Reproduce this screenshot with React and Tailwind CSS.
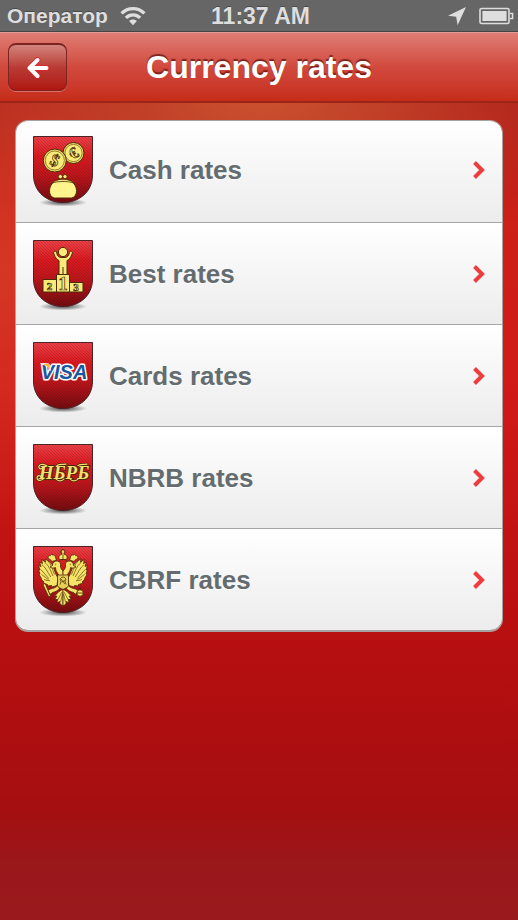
import React from 'react';

const gold = '#f7ea78';
const ink = '#4a2a08';

const WifiIcon = () => (
    <svg viewBox="0 0 26 20" className="w-[26px] h-5" fill="none" stroke="#dedede" strokeWidth="3.4" aria-hidden="true">
        <path d="M1.6 7.4C8 1 18 1 24.4 7.4" />
        <path d="M5.9 11.9c4.1-4 10.1-4 14.2 0" />
        <path d="M13 19.2l-3.9-4.1c2.2-2 5.6-2 7.8 0z" fill="#dedede" stroke="none" />
    </svg>
);

const LocationIcon = () => (
    <svg viewBox="0 0 20 20" className="size-5" aria-hidden="true">
        <path d="M19 1L10.6 19.2 9.2 10.8 1 9.8z" fill="#dedede" />
    </svg>
);

const BatteryIcon = () => (
    <svg viewBox="0 0 35 18" className="w-[35px] h-[18px]" aria-hidden="true">
        <rect x="1" y="1.5" width="29" height="15" rx="1.5" fill="none" stroke="#dedede" strokeWidth="1.6" />
        <rect x="3.4" y="4" width="24.2" height="10" fill="#dedede" />
        <path d="M31 6.5h2.6v5H31" fill="none" stroke="#dedede" strokeWidth="1.5" />
    </svg>
);

const CashEmblem = () => (
    <g stroke={ink} strokeWidth="1">
        <circle cx="40.5" cy="17" r="10.5" fill="#e8d85e" />
        <circle cx="40.5" cy="17" r="8.6" fill={gold} strokeWidth="0.5" />
        <text x="40.5" y="22.5" textAnchor="middle" transform="rotate(-30 40.5 17)" className="font-['Liberation_Serif',serif] font-bold text-[16px]" fill={gold} strokeWidth="0.7">€</text>
        <circle cx="21.8" cy="24.5" r="11.5" fill="#e8d85e" />
        <circle cx="21.8" cy="24.5" r="9.5" fill={gold} strokeWidth="0.5" />
        <text x="21.8" y="30" textAnchor="middle" transform="rotate(24 21.8 24.5)" className="font-['Liberation_Serif',serif] font-bold text-[17px]" fill={gold} strokeWidth="0.7">$</text>
        <path d="M20.5 46c5-3.500 14-3.500 19 0 2 2 4 5 4 8.500 0 5-2.500 7.500-6 7.500h-15c-3.500 0-6-2.500-6-7.500 0-3.500 2-6.500 4-8.500z" fill="#fff58c" />
        <path d="M19.5 47c4-5 17-5 21 0-5-2-16-2-21 0z" fill={gold} strokeWidth="0.8" />
        <circle cx="27.4" cy="40.6" r="2.1" fill={gold} strokeWidth="0.8" />
        <circle cx="32" cy="40.6" r="2.1" fill={gold} strokeWidth="0.8" />
    </g>
);

const BestEmblem = () => (
    <g stroke={ink} strokeWidth="1" fill={gold}>
        <path d="M21.500 11.300c-1.500.7-.8 2.200-.2 3.400.9 2.500 2.200 4.700 4.700 5.800v14h8v-14c2.500-1.100 3.800-3.300 4.700-5.800.6-1.200 1.300-2.700-.2-3.400-1.700-.6-2.200.7-2.300 2.200-.6 2-1.700 3.500-3.700 4h-5c-2-.5-3.100-2-3.700-4-.1-1.500-.6-2.800-2.300-2.200z" />
        <path d="M30 27v8" />
        <circle cx="30" cy="12" r="4.6" />
        <path d="M10 39.500h13.500V52H10zM36.500 42.500H50V52H36.500z" />
        <path d="M23.500 34.500h13V52h-13z" />
        <g textAnchor="middle" strokeWidth="0.7" className="font-['Liberation_Serif',serif] font-bold">
            <text x="16.5" y="49.5" className="text-[11px]">2</text>
            <text x="30" y="50" className="text-[19px]">1</text>
            <text x="43" y="51" className="text-[11px]">3</text>
        </g>
    </g>
);

const CardsEmblem = () => (
    <g>
        <text x="31" y="36.5" textAnchor="middle" className="font-['Liberation_Sans',Arial,sans-serif] font-bold italic text-[20px]" fill="#1657a0" stroke="#fff" strokeWidth="3" strokeLinejoin="round" paintOrder="stroke">VISA</text>
        <path d="M7.500 21.500h6.500c1.800 0 2.600.8 2.900 2.400l.8 4.800c-2-3.400-5.200-5.800-10.200-7.200z" fill="#f7b52c" stroke="#fff" strokeWidth="0.6" />
    </g>
);

const nbrbSwashes = 'M14 22c-4-3-9-1.500-8 1.500.8 2 3.600 1.500 3.500-.4M11 34c-2 3.400-7 3-7-.3 0-2.400 3.400-2.700 3.800-.6M23 35c2 2.500 6 2.500 8 0M37 35c2 2.500 6 2.500 8 0M24 21.500c3-2 6-.8 9-1.300M45 21.500c3-2 6-.8 9-1.300';

const NbrbEmblem = () => (
    <g fill="none" strokeLinecap="round">
        <path d={nbrbSwashes} stroke={ink} strokeWidth="2.4" />
        <text x="31" y="35" textAnchor="middle" className="font-['Liberation_Serif',serif] italic text-[19px]" fill="#f3df72" stroke={ink} strokeWidth="2" strokeLinejoin="round" paintOrder="stroke">НБРБ</text>
        <path d={nbrbSwashes} stroke="#f3df72" strokeWidth="1.2" />
    </g>
);

// one half of the double-headed eagle, mirrored for the other side
const EagleHalf = () => (
    <g>
        {/* wing */}
        <path d="M25 32c-3-4-3.500-9-5.500-13-2-3-4.500-4.500-7.500-6l.5 3L8.500 13.500l1 4-3-1.500 1.500 4.500L5.500 19.500l1.500 4.500-1.500-.5 1.500 4.500-1 .5 2.500 4-.5.6 3 2.900-.8 1.200 4.300 1.300v1.500l4-.5.5 1.500 5-1.500z" />
        <path d="M11.500 16c5 4 6 9 8.500 14M8.800 18.500c4 3 6 8 9 12.500M7.800 23.500c3 3 5 6 8 9M8.500 28.500c3 2 5 4 7 5M11 33.500c2 .8 4 1.200 6 1.200M14.500 14.500c4 4 5 9 7 14" fill="none" strokeWidth="0.6" />
        {/* head, beak and neck */}
        <path d="M25.500 31c1-3-3-5-3-9.500-2 1-4 .5-5.500-.5l2.500-1.500c0-3 2-4.500 4.500-4.500 3 0 4 2.500 3.500 5-.2 2 1 3.500 2.500 5v6z" />
        <path d="M22.500 18.500h.6" strokeWidth="1.4" />
        {/* side crown */}
        <path d="M19 15.500c-.8-1.500-2-2.500-3.600-2.500-1-2.500.6-3.700 2-3.300-.3-1.500 1.300-1.900 1.900-.7 2-.4 3.200.7 3.200 2.500l1 2.500z" />
        {/* leg */}
        <path d="M25 39.500c-2 2-5 3-7.500 3.500l-4 2 2.500.5-2 2.500 3-1-.2 2.200 2.500-2.700c3-.6 6-2 7.500-4.500z" />
        {/* tail */}
        <path d="M30 43l-4 2.500-4.500 4.500 2.500.2-2.500 3.500 3-.4-.5 3.400 2.700-1.200.4 2.600L30 60z" />
        <path d="M29 46l-4.500 8.500M29.500 48l-2 8" fill="none" strokeWidth="0.6" />
    </g>
);

const CbrfEmblem = () => (
    <g fill="#f5e468" stroke={ink} strokeWidth="0.8" strokeLinejoin="round">
        <EagleHalf />
        <g transform="matrix(-1 0 0 1 60 0)">
            <EagleHalf />
        </g>
        {/* sceptre and orb */}
        <path d="M10 38.500l1.800-1 1.200 2 4.500 10.500-1.700.9-5-10.400z" />
        <circle cx="47" cy="47" r="3.2" />
        <path d="M43.800 47h6.400M47 43.800v-2.300M45.800 42.300h2.400" />
        {/* main crown */}
        <path d="M26.500 13.500c-1.500-3 .3-5 2.500-5.200V6.700h-1.300V5.200H29V3.500h2v1.700h1.300v1.500H31v1.600c2.200.2 4 2.200 2.500 5.200z" />
        <path d="M25.500 16c1-2 2.500-2.500 4.500-2.500s3.500.5 4.500 2.500M30 8.500v5" fill="none" />
        {/* breast shield with rider */}
        <path d="M24.500 29h11v10.500c0 2-3 2.500-5.500 4-2.500-1.500-5.500-2-5.500-4z" fill="#e5cf55" />
        <path d="M27 38.500l1-3-1-2.500 2-2h2l2 2-1 2 1 3.500M28.500 36l3.500-1.500M28 33l4 5" fill="none" strokeWidth="0.7" />
    </g>
);

const Shield = ({ children }) => (
    <svg viewBox="0 0 60 68" className="w-[60px] h-[68px] shrink-0 overflow-visible" aria-hidden="true">
        <defs>
            <linearGradient id="shieldFill" x1="0" y1="0" x2="0" y2="1">
                <stop offset="0" stopColor="#ee4147" />
                <stop offset="0.3" stopColor="#dc1a20" />
                <stop offset="0.6" stopColor="#bd161c" />
                <stop offset="1" stopColor="#740c10" />
            </linearGradient>
            <radialGradient id="shieldShadow">
                <stop offset="0" stopColor="#000" stopOpacity="0.7" />
                <stop offset="1" stopColor="#000" stopOpacity="0" />
            </radialGradient>
            <pattern id="shieldHatch" width="3" height="3" patternUnits="userSpaceOnUse">
                <path d="M0 0l3 3" stroke="#000" strokeOpacity="0.18" strokeWidth="0.8" />
            </pattern>
        </defs>
        <ellipse cx="30" cy="66.5" rx="24" ry="4" fill="url(#shieldShadow)" />
        <path d="M.5.5h59V39C59.500 56 46 66.500 30 66.500S.5 56 .5 39z" fill="url(#shieldFill)" />
        <path d="M.5.5h59V39C59.500 56 46 66.500 30 66.500S.5 56 .5 39z" fill="url(#shieldHatch)" stroke="#4b2326" />
        {children}
    </svg>
);

const rates = [
    { id: 'cash', label: 'Cash rates', Emblem: CashEmblem },
    { id: 'best', label: 'Best rates', Emblem: BestEmblem },
    { id: 'cards', label: 'Cards rates', Emblem: CardsEmblem },
    { id: 'nbrb', label: 'NBRB rates', Emblem: NbrbEmblem },
    { id: 'cbrf', label: 'CBRF rates', Emblem: CbrfEmblem },
];

const App = () => {
    return (
        <div className="min-h-screen flex flex-col font-['Liberation_Sans',Arial,sans-serif] font-bold bg-[radial-gradient(ellipse_60%_180px_at_50%_90px,rgba(208,92,52,0.85),rgba(208,92,52,0)),radial-gradient(ellipse_35%_260px_at_0%_270px,rgba(218,72,44,0.6),rgba(218,72,44,0)),linear-gradient(to_bottom,#a91e18_0%,#b0211a_12%,#cc2018_24%,#d01a18_42%,#ba0f11_67%,#ad0e10_80%,#a50f11_88%,#9a171a_94%,#991a1c_100%)]">

            {/* STATUS BAR */}
            <div className="h-8 grid grid-cols-[1fr_auto_1fr] items-center pl-[7px] pr-1 bg-[#666666] border-b border-[#454545] text-[#dedede] [text-shadow:0_-1px_0_rgba(0,0,0,0.3)]">
                <div className="flex items-center gap-3">
                    <span className="text-[21px] leading-6">Оператор</span>
                    <WifiIcon />
                </div>
                <span className="text-[23px] leading-6">11:37 AM</span>
                <div className="flex items-center justify-end gap-3">
                    <LocationIcon />
                    <BatteryIcon />
                </div>
            </div>

            {/* HEADER */}
            <header className="h-[71px] grid grid-cols-[1fr_auto_1fr] items-center px-2 bg-linear-to-b from-[#de7c74] via-[#d2493e] to-[#c52c18] border-t border-t-[#e39c96] border-b-2 border-b-[#9c2418]">
                <button
                    type="button"
                    aria-label="Back"
                    className="w-[59px] h-12 flex items-center justify-center rounded-lg border border-t-2 border-[#7c2520] bg-linear-to-b from-[#d2837d] via-[#b93a34] to-[#b01510] shadow-[0_1px_0_#dc7064]"
                >
                    <svg viewBox="0 0 22 22" className="size-[22px]" fill="none" strokeLinecap="round" strokeLinejoin="round" aria-hidden="true">
                        <path d="M10.500 3L2.500 11l8 8M3 11h16.500" stroke="#e5222b" strokeWidth="5.6" />
                        <path d="M10.500 3L2.500 11l8 8M3 11h16.500" stroke="#fff" strokeWidth="4" />
                    </svg>
                </button>
                <h1 className="text-[32px] leading-9 text-white [text-shadow:0_-2px_1px_rgba(80,10,5,0.65)]">Currency rates</h1>
            </header>

            {/* RATES LIST */}
            <main className="px-[15px] pt-[17px] pb-8">
                <ul className="rounded-[13px] overflow-hidden border border-b-2 border-[#a7a3a3]">
                    {rates.map(({ id, label, Emblem }) => (
                        <li key={id} className="group border-b last:border-b-0 border-[#a6a6a6]">
                            <a
                                href={`#${id}`}
                                className="flex items-center gap-4 pl-[17px] pr-4 pt-[17px] pb-4 group-first:pt-[15px] group-first:pb-[18px] bg-linear-to-b from-white to-[#ececec]"
                            >
                                <Shield>
                                    <Emblem />
                                </Shield>
                                <span className="flex-1 text-[26px] leading-8 text-[#646c6f] [text-shadow:0_1px_0_#fff]">{label}</span>
                                <svg viewBox="0 0 14 20" className="w-3.5 h-5" fill="none" stroke="#f03c3c" strokeWidth="4" aria-hidden="true">
                                    <path d="M2.500 2.500L10 10l-7.500 7.500" />
                                </svg>
                            </a>
                        </li>
                    ))}
                </ul>
            </main>
        </div>
    );
};

export default App;
